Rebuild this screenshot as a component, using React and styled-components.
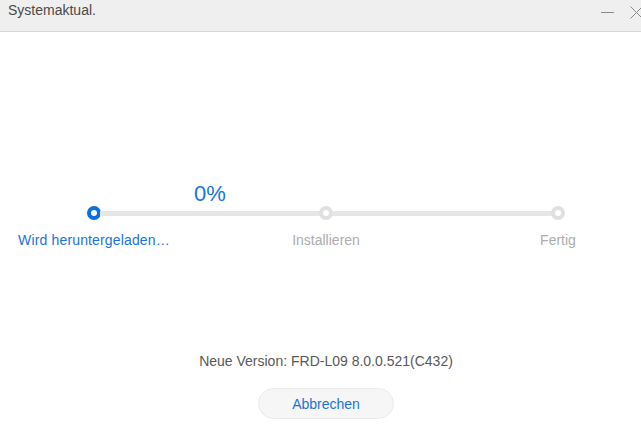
import React from "react";
import styled, { createGlobalStyle } from "styled-components";

const Global = createGlobalStyle`
  html, body { margin: 0; padding: 0; background: #ffffff; overflow: hidden; }
  body { font-family: "Liberation Sans", Arial, sans-serif; }
`;

const Window = styled.div`
  width: 652px;
  height: 443px;
  background: #ffffff;
  display: flex;
  flex-direction: column;
`;

const TitleBar = styled.div`
  height: 31px;
  flex: 0 0 auto;
  background: #efefef;
  border-bottom: 1px solid #d6d6d6;
  display: flex;
  align-items: flex-start;
  justify-content: space-between;
  padding: 0 9px 0 8px;
`;

const Title = styled.div`
  font-size: 14px;
  line-height: 16px;
  color: #4a4a4a;
  padding-top: 2px;
`;

const Controls = styled.div`
  display: flex;
  align-items: center;
  gap: 16px;
  padding-top: 6px;
`;

const CtrlIcon = styled.svg`
  display: block;
  width: 13px;
  height: 13px;
`;

const Body = styled.div`
  display: flex;
  flex-direction: column;
  align-items: center;
`;

const Stepper = styled.div`
  margin-top: 149px;
  width: 478px;
  display: grid;
  grid-template-columns: 14px 1fr 14px 1fr 14px;
  grid-template-rows: 25px 14px auto;
`;

const Percent = styled.div`
  grid-column: 2;
  grid-row: 1;
  text-align: center;
  font-size: 22px;
  line-height: 25px;
  color: #1474e0;
`;

const Dot = styled.div`
  grid-row: 2;
  grid-column: ${(p) => p.$col};
  width: 14px;
  height: 14px;
  box-sizing: border-box;
  border-radius: 50%;
  border: 4px solid ${(p) => (p.$active ? "#0a6fe0" : "#e0e0e0")};
  background: #ffffff;
`;

const Line = styled.div`
  grid-row: 2;
  grid-column: ${(p) => p.$col};
  align-self: center;
  height: 5px;
  background: #e6e6e6;
  margin: 0 -1px;
`;

const Label = styled.div`
  grid-row: 3;
  grid-column: ${(p) => p.$col};
  margin-top: 12px;
  display: flex;
  justify-content: center;
  white-space: nowrap;
  font-size: 14px;
  line-height: 16px;
  color: ${(p) => (p.$active ? "#1a73dc" : "#adadad")};
  letter-spacing: ${(p) => (p.$active ? "0.15px" : "0")};
`;

const Version = styled.div`
  margin-top: 105px;
  font-size: 14px;
  line-height: 16px;
  color: #595959;
`;

const CancelButton = styled.button`
  margin-top: 19px;
  width: 136px;
  height: 31px;
  box-sizing: border-box;
  border-radius: 16px;
  border: 1px solid #ebebeb;
  background: #f6f6f6;
  color: #1a73dc;
  font-family: "Liberation Sans", Arial, sans-serif;
  font-size: 14px;
  line-height: 16px;
  padding: 0;
  cursor: pointer;
`;

export default function App() {
  return (
    <>
      <Global />
      <Window>
        <TitleBar>
          <Title>Systemaktual.</Title>
          <Controls>
            <CtrlIcon viewBox="0 0 13 13">
              <line x1="0" y1="6.5" x2="13" y2="6.5" stroke="#8a8a8a" strokeWidth="1" />
            </CtrlIcon>
            <CtrlIcon viewBox="0 0 13 13">
              <line x1="0.5" y1="0.5" x2="12.5" y2="12.5" stroke="#8a8a8a" strokeWidth="1" />
              <line x1="12.5" y1="0.5" x2="0.5" y2="12.5" stroke="#8a8a8a" strokeWidth="1" />
            </CtrlIcon>
          </Controls>
        </TitleBar>
        <Body>
          <Stepper>
            <Percent>0%</Percent>
            <Dot $col={1} $active />
            <Line $col={2} />
            <Dot $col={3} />
            <Line $col={4} />
            <Dot $col={5} />
            <Label $col={1} $active>Wird heruntergeladen…</Label>
            <Label $col={3}>Installieren</Label>
            <Label $col={5}>Fertig</Label>
          </Stepper>
          <Version>Neue Version: FRD-L09 8.0.0.521(C432)</Version>
          <CancelButton>Abbrechen</CancelButton>
        </Body>
      </Window>
    </>
  );
}
